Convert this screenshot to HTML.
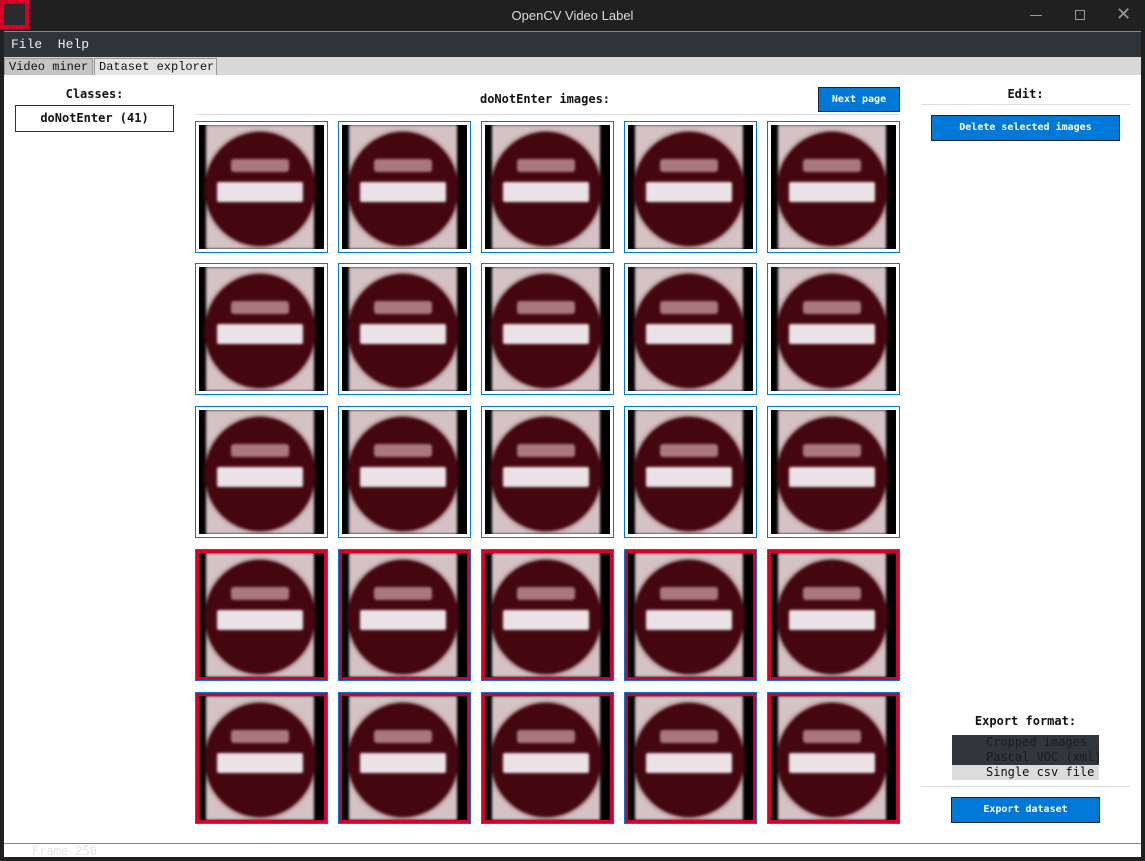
<!DOCTYPE html>
<html><head><meta charset="utf-8"><style>
*{margin:0;padding:0;box-sizing:border-box}
body{width:1145px;height:861px;background:#202020;position:relative;overflow:hidden;font-family:"Liberation Mono","DejaVu Sans Mono",monospace;}
.abs{position:absolute}
#title{left:0;top:0;width:1145px;height:31px;color:#ddd;font:13px "Liberation Sans",sans-serif;text-align:center;line-height:31px}
#ico{left:0;top:0;width:29px;height:29px;border:4px solid #d4002a;background:#2a2a2a}
#frame{left:4px;top:31px;width:1137px;height:826px;background:#fff;border-top:1px solid #888}
#menu{left:4px;top:32px;width:1137px;height:25px;background:#2f3439;color:#eee;font-size:13px;line-height:25px;padding-left:7px}
#tabs{left:4px;top:57px;width:1137px;height:18px;background:#d8d8d8}
.tab{position:absolute;top:1px;height:17px;font-size:12px;line-height:16px;padding-left:4px;color:#111;border:1px solid #999;border-bottom:none}
.lbl{font-family:"DejaVu Sans Mono",monospace;font-weight:bold;font-size:12px;color:#111;text-align:center}
.btn{background:#0078d7;border:1px solid #223;color:#fff;font:bold 10px "DejaVu Sans Mono",monospace;text-align:center}
.t{position:absolute;width:133px;height:132px;border:1px solid #0078d7;padding:3px;background:#fff}
.t.s{border:1px solid #0078d7;box-shadow:inset 0 0 0 3px #d4002a;padding:3px}
.im{width:100%;height:100%;background:#000;position:relative;overflow:hidden}
.sq{position:absolute;left:7px;right:10px;top:0;bottom:0;background:#d4c2c5;filter:blur(1.2px)}
.ci{position:absolute;left:-1px;right:-1px;top:7px;bottom:3px;border-radius:50%;background:#45070f;box-shadow:0 0 4px #5a1a22}
.bar{position:absolute;left:12px;right:12px;top:44%;height:17%;background:#ebe2e8;border-radius:2px}
.tx1{position:absolute;left:24%;right:24%;top:24%;height:11%;background:#a9787f;border-radius:3px}
.tx2{position:absolute;left:28%;right:28%top:72%;top:72%;height:10%;background:#b297a8;border-radius:3px}
</style></head><body>
<div class="abs" id="title">OpenCV Video Label</div>
<div class="abs" id="ico"></div>
<div class="abs" style="left:1030px;top:15px;width:12px;height:1px;background:#999"></div>
<div class="abs" style="left:1075px;top:10px;width:10px;height:10px;border:1px solid #999"></div>
<div class="abs" style="left:1116px;top:4px;color:#999;font:18px 'DejaVu Sans',sans-serif">✕</div>
<div class="abs" id="frame"></div>
<div class="abs" id="menu">File&nbsp;&nbsp;Help</div>
<div class="abs" id="tabs">
<div class="tab" style="left:0;width:89px;background:#c4c4c4">Video miner</div>
<div class="tab" style="left:90px;width:123px;background:#e4e4e4">Dataset explorer</div>
</div>
<div class="abs lbl" style="left:15px;top:87px;width:159px">Classes:</div>
<div class="abs lbl" style="left:15px;top:105px;width:159px;height:27px;border:1px solid #333;line-height:25px">doNotEnter (41)</div>
<div class="abs lbl" style="left:420px;top:92px;width:250px">doNotEnter images:</div>
<div class="abs btn" style="left:818px;top:87px;width:82px;height:25px;line-height:23px">Next page</div>
<div class="abs" style="left:195px;top:114px;width:705px;height:1px;background:#ddd"></div>
<div class="abs lbl" style="left:921px;top:87px;width:209px">Edit:</div>
<div class="abs" style="left:921px;top:104px;width:209px;height:1px;background:#ddd"></div>
<div class="abs btn" style="left:931px;top:115px;width:189px;height:26px;line-height:24px">Delete selected images</div>
<div class="abs lbl" style="left:921px;top:714px;width:209px">Export format:</div>
<div class="abs" style="left:952px;top:735px;width:147px;height:30px;background:#30363b"></div>
<div class="abs" style="left:952px;top:765px;width:147px;height:15px;background:#dcdcdc"></div>
<div class="abs" style="left:986px;top:735px;font:12px 'DejaVu Sans Mono',monospace;color:#1c1c1c;line-height:15px">Cropped images<br>Pascal VOC (xml)<br><span style="color:#111">Single csv file</span></div>
<div class="abs" style="left:921px;top:786px;width:209px;height:1px;background:#ddd"></div>
<div class="abs btn" style="left:951px;top:797px;width:149px;height:26px;line-height:24px">Export dataset</div>
<div class="abs" style="left:4px;top:843px;width:1137px;height:1px;background:#888"></div>
<div class="abs" style="left:32px;top:844px;font:12px 'DejaVu Sans Mono',monospace;color:#e4e4e4">Frame 250</div>

<div class="t" style="left:195px;top:121px"><div class="im"><div class="sq"><div class="ci"><div class="tx1"></div><div class="bar"></div><div class="tx2"></div></div></div></div></div>
<div class="t" style="left:338px;top:121px"><div class="im"><div class="sq"><div class="ci"><div class="tx1"></div><div class="bar"></div><div class="tx2"></div></div></div></div></div>
<div class="t" style="left:481px;top:121px"><div class="im"><div class="sq"><div class="ci"><div class="tx1"></div><div class="bar"></div><div class="tx2"></div></div></div></div></div>
<div class="t" style="left:624px;top:121px"><div class="im"><div class="sq"><div class="ci"><div class="tx1"></div><div class="bar"></div><div class="tx2"></div></div></div></div></div>
<div class="t" style="left:767px;top:121px"><div class="im"><div class="sq"><div class="ci"><div class="tx1"></div><div class="bar"></div><div class="tx2"></div></div></div></div></div>

<div class="t" style="left:195px;top:263px"><div class="im"><div class="sq"><div class="ci"><div class="tx1"></div><div class="bar"></div><div class="tx2"></div></div></div></div></div>
<div class="t" style="left:338px;top:263px"><div class="im"><div class="sq"><div class="ci"><div class="tx1"></div><div class="bar"></div><div class="tx2"></div></div></div></div></div>
<div class="t" style="left:481px;top:263px"><div class="im"><div class="sq"><div class="ci"><div class="tx1"></div><div class="bar"></div><div class="tx2"></div></div></div></div></div>
<div class="t" style="left:624px;top:263px"><div class="im"><div class="sq"><div class="ci"><div class="tx1"></div><div class="bar"></div><div class="tx2"></div></div></div></div></div>
<div class="t" style="left:767px;top:263px"><div class="im"><div class="sq"><div class="ci"><div class="tx1"></div><div class="bar"></div><div class="tx2"></div></div></div></div></div>

<div class="t" style="left:195px;top:406px"><div class="im"><div class="sq"><div class="ci"><div class="tx1"></div><div class="bar"></div><div class="tx2"></div></div></div></div></div>
<div class="t" style="left:338px;top:406px"><div class="im"><div class="sq"><div class="ci"><div class="tx1"></div><div class="bar"></div><div class="tx2"></div></div></div></div></div>
<div class="t" style="left:481px;top:406px"><div class="im"><div class="sq"><div class="ci"><div class="tx1"></div><div class="bar"></div><div class="tx2"></div></div></div></div></div>
<div class="t" style="left:624px;top:406px"><div class="im"><div class="sq"><div class="ci"><div class="tx1"></div><div class="bar"></div><div class="tx2"></div></div></div></div></div>
<div class="t" style="left:767px;top:406px"><div class="im"><div class="sq"><div class="ci"><div class="tx1"></div><div class="bar"></div><div class="tx2"></div></div></div></div></div>

<div class="t s" style="left:195px;top:549px"><div class="im"><div class="sq"><div class="ci"><div class="tx1"></div><div class="bar"></div><div class="tx2"></div></div></div></div></div>
<div class="t s" style="left:338px;top:549px"><div class="im"><div class="sq"><div class="ci"><div class="tx1"></div><div class="bar"></div><div class="tx2"></div></div></div></div></div>
<div class="t s" style="left:481px;top:549px"><div class="im"><div class="sq"><div class="ci"><div class="tx1"></div><div class="bar"></div><div class="tx2"></div></div></div></div></div>
<div class="t s" style="left:624px;top:549px"><div class="im"><div class="sq"><div class="ci"><div class="tx1"></div><div class="bar"></div><div class="tx2"></div></div></div></div></div>
<div class="t s" style="left:767px;top:549px"><div class="im"><div class="sq"><div class="ci"><div class="tx1"></div><div class="bar"></div><div class="tx2"></div></div></div></div></div>

<div class="t s" style="left:195px;top:692px"><div class="im"><div class="sq"><div class="ci"><div class="tx1"></div><div class="bar"></div><div class="tx2"></div></div></div></div></div>
<div class="t s" style="left:338px;top:692px"><div class="im"><div class="sq"><div class="ci"><div class="tx1"></div><div class="bar"></div><div class="tx2"></div></div></div></div></div>
<div class="t s" style="left:481px;top:692px"><div class="im"><div class="sq"><div class="ci"><div class="tx1"></div><div class="bar"></div><div class="tx2"></div></div></div></div></div>
<div class="t s" style="left:624px;top:692px"><div class="im"><div class="sq"><div class="ci"><div class="tx1"></div><div class="bar"></div><div class="tx2"></div></div></div></div></div>
<div class="t s" style="left:767px;top:692px"><div class="im"><div class="sq"><div class="ci"><div class="tx1"></div><div class="bar"></div><div class="tx2"></div></div></div></div></div>
</body></html>
